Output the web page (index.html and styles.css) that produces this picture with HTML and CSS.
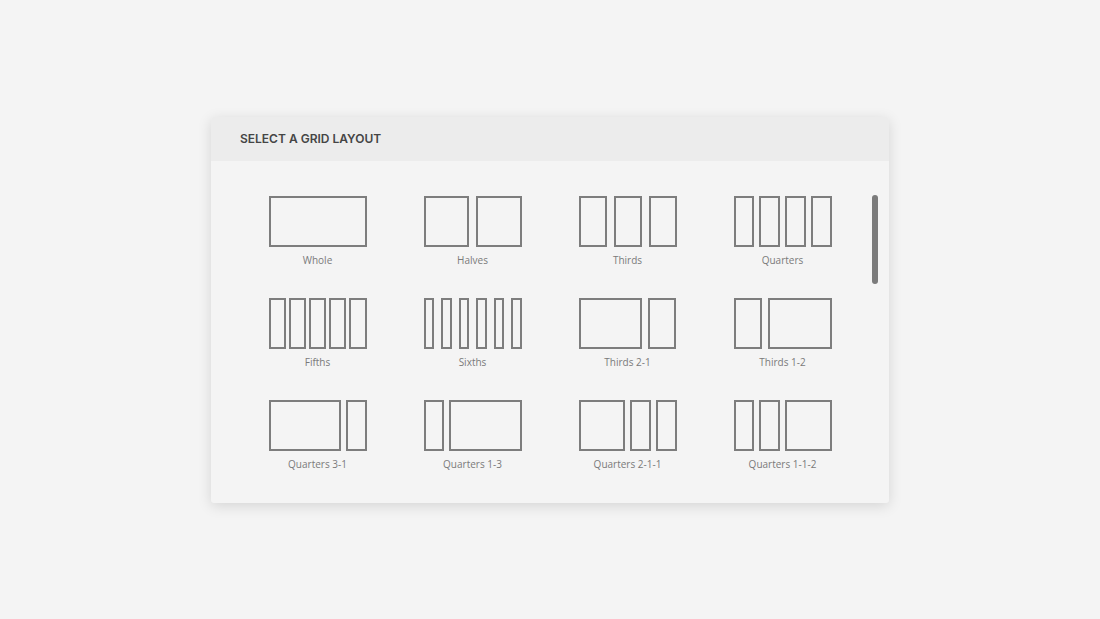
FILE: index.html
```html
<!DOCTYPE html>
<html lang="en">
<head>
    <meta charset="UTF-8">
    <title>Grid layouts</title>
    <link rel="stylesheet" href="styles.css">
</head>
<body>
    <div class="picker">
        <div class="picker-head">SELECT A GRID LAYOUT</div>
        <div class="picker-body">
            <div class="layout">
                <div class="boxes c1"><span></span></div>
                <div class="name">Whole</div>
            </div>
            <div class="layout">
                <div class="boxes c2 g7"><span></span><span></span></div>
                <div class="name">Halves</div>
            </div>
            <div class="layout">
                <div class="boxes c3 g7"><span></span><span></span><span></span></div>
                <div class="name">Thirds</div>
            </div>
            <div class="layout">
                <div class="boxes c4 g5"><span></span><span></span><span></span><span></span></div>
                <div class="name">Quarters</div>
            </div>

            <div class="layout">
                <div class="boxes c5 g3"><span></span><span></span><span></span><span></span><span></span></div>
                <div class="name">Fifths</div>
            </div>
            <div class="layout">
                <div class="boxes c6 g7"><span></span><span></span><span></span><span></span><span></span><span></span></div>
                <div class="name">Sixths</div>
            </div>
            <div class="layout">
                <div class="boxes c3 g6"><span class="s2"></span><span></span></div>
                <div class="name">Thirds 2-1</div>
            </div>
            <div class="layout">
                <div class="boxes c3 g6"><span></span><span class="s2"></span></div>
                <div class="name">Thirds 1-2</div>
            </div>

            <div class="layout">
                <div class="boxes c4 g5"><span class="s3"></span><span></span></div>
                <div class="name">Quarters 3-1</div>
            </div>
            <div class="layout">
                <div class="boxes c4 g5"><span></span><span class="s3"></span></div>
                <div class="name">Quarters 1-3</div>
            </div>
            <div class="layout">
                <div class="boxes c4 g5"><span class="s2"></span><span></span><span></span></div>
                <div class="name">Quarters 2-1-1</div>
            </div>
            <div class="layout">
                <div class="boxes c4 g5"><span></span><span></span><span class="s2"></span></div>
                <div class="name">Quarters 1-1-2</div>
            </div>
        </div>
        <div class="thumb"></div>
    </div>
</body>
</html>
```

FILE: styles.css
```css
*{
    margin: 0;padding: 0;
    box-sizing: border-box;
}
html,body{
    height: 100%;
}
body{
    background-color: #f4f4f4;
    display: flex;
    align-items: center;
    justify-content: center;
    font-family: "Open Sans", "Liberation Sans", sans-serif;
}
.picker{
    position: relative;
    width: 678px;
    height: 386px;
    background-color: #f4f4f4;
    border-radius: 3px;
    box-shadow: 0 3px 14px rgba(0,0,0,0.13);
    overflow: hidden;
}
.picker-head{
    height: 44px;
    padding-left: 29px;
    display: flex;
    align-items: center;
    background-color: #ececec;
    font-family: "Inter", "Liberation Sans", sans-serif;
    font-weight: 600;
    font-size: 12px;
    color: #454545;
}
.picker-body{
    display: grid;
    grid-template-columns: repeat(4, 155px);
    row-gap: 31px;
    padding: 35px 0 0 29px;
}
.layout{
    display: flex;
    flex-direction: column;
    align-items: center;
}
/* each preview is a small grid, wide boxes span several columns */
.boxes{
    width: 98px;
    height: 51px;
    display: grid;
}
.boxes span{
    border: 2px solid #7d7d7d;
}
.c1{ grid-template-columns: 1fr; }
.c2{ grid-template-columns: repeat(2, 1fr); }
.c3{ grid-template-columns: repeat(3, 1fr); }
.c4{ grid-template-columns: repeat(4, 1fr); }
.c5{ grid-template-columns: repeat(5, 1fr); }
.c6{ grid-template-columns: repeat(6, 1fr); }
.s2{ grid-column: span 2; }
.s3{ grid-column: span 3; }
.g3{ column-gap: 3px; }
.g5{ column-gap: 5px; }
.g6{ column-gap: 6px; }
.g7{ column-gap: 7px; }
.name{
    margin-top: 6px;
    font-size: 10px;
    line-height: 14px;
    color: #7a7a7a;
}
/* scroll thumb of the list */
.thumb{
    position: absolute;
    left: 661px;
    top: 78px;
    width: 6px;
    height: 89px;
    border-radius: 3px;
    background-color: #7b7b7b;
}
```
